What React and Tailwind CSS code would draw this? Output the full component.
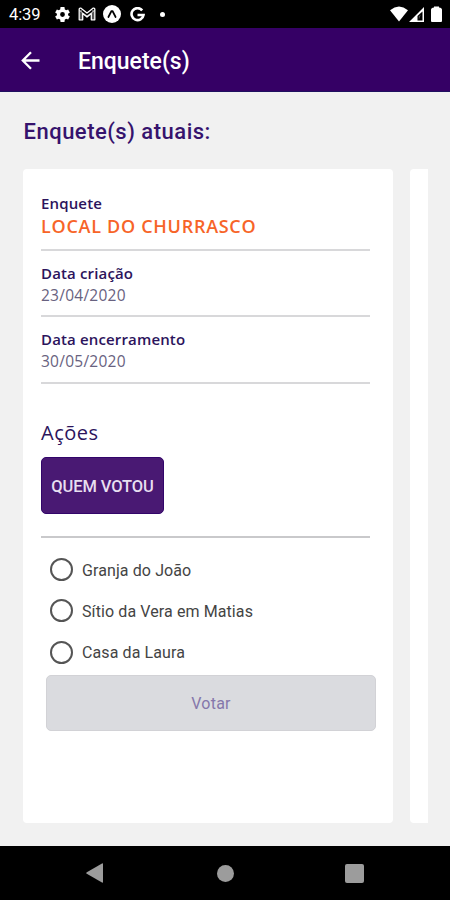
const label = "block h-[22px] whitespace-nowrap text-[15px] font-semibold leading-[22px] tracking-[0.15px] text-[#2c145c]";
const date = "block h-[22px] whitespace-nowrap text-[15.5px] font-normal leading-[22px] tracking-[0.25px] text-[#686280]";
const rule = "h-0.5 w-[329px] bg-[#d8d8da]";

function StatusBar() {
  return (
    <div className="flex h-7 shrink-0 items-center justify-between bg-black pl-[9px] pr-2 text-white">
      <div className="flex h-full items-center">
        <span className="w-[46px] whitespace-nowrap pt-px text-[16.5px] leading-7 tracking-[-0.1px]">4:39</span>
        <svg className="h-[15px] w-[15px]" viewBox="2 2 20 20" fill="currentColor">
          <path fillRule="evenodd" d="M19.4 13a7.5 7.5 0 0 0 0-2l2.400-1.800-2.300-4-2.700 1.100a7.300 7.300 0 0 0-1.700-1L14.600 2H9.400l-.5 3.300a7.300 7.300 0 0 0-1.700 1L4.500 5.200l-2.300 4L4.600 11a7.500 7.500 0 0 0 0 2l-2.400 1.800 2.300 4 2.700-1.100a7.300 7.300 0 0 0 1.700 1l.5 3.300h5.200l.5-3.300a7.300 7.300 0 0 0 1.700-1l2.700 1.100 2.300-4zM12 8.800a3.200 3.200 0 1 1 0 6.400 3.200 3.200 0 0 1 0-6.400z" />
        </svg>
        <svg className="ml-2 h-[14px] w-[18px]" viewBox="0 0 18 14" fill="none" stroke="currentColor">
          <path d="M1.200 12.800V2.200Q1.400.7 3 1.200L9 6l6-4.800q1.600-.5 1.800 1v10.600h-3.500V6.500L9 10 4.700 6.500v6.300z" strokeWidth="1.300" strokeLinejoin="round" />
          <path d="m1.500 3.500 7.500 5.500 7.500-5.500M3 3v9.500M15 3v9.500" strokeWidth="1" opacity=".7" />
        </svg>
        <svg className="ml-[7px] h-[18px] w-[18px]" viewBox="0 0 18 18">
          <circle cx="9" cy="9" r="9" fill="white" />
          <path d="m5.400 12 3.100-6h1l3.100 6" fill="none" stroke="black" strokeWidth="1.700" strokeLinecap="round" strokeLinejoin="round" />
        </svg>
        <svg className="ml-[9px] h-[15px] w-[15px]" viewBox="0 0 15 15" fill="none" stroke="currentColor" strokeWidth="2.600">
          <path d="M12.200 3.300A6 6 0 1 0 13.500 8H7.500" />
        </svg>
        <span className="ml-[15px] h-[5px] w-[5px] rounded-full bg-white" />
      </div>
      <div className="flex items-center">
        <svg className="h-[16px] w-[18px]" viewBox="0 0 18 16" fill="currentColor">
          <path d="M0 4.200Q9-3 18 4.200L9 15.500z" />
        </svg>
        <svg className="ml-px h-[15px] w-[15px]" viewBox="0 0 15 15" fill="currentColor">
          <path fillRule="evenodd" d="M15 0v15H0zM13.500 4.500 8.500 9v4.500h5z" />
          <path d="M9.800 12.800V9.500l2-2z" opacity=".35" />
        </svg>
        <svg className="ml-[7px] h-[16px] w-[11px]" viewBox="0 0 11 16" fill="currentColor">
          <path d="M3 1.500V.5h5v1q3 .3 3 2.300V15q0 1-1 1H1q-1 0-1-1V3.800q0-2 3-2.300z" />
        </svg>
      </div>
    </div>
  );
}

function Option({ children }) {
  return (
    <div className="flex h-[41.3px] items-center">
      <span className="h-[23px] w-[23px] rounded-full border-2 border-[#555]" />
      <span className="ml-[9px] whitespace-nowrap pt-[2px] text-base tracking-[0.100px] text-[#444]">{children}</span>
    </div>
  );
}

export default function App() {
  return (
    <div className="flex h-[900px] w-[450px] flex-col overflow-hidden bg-[#f1f1f1] font-['Roboto',sans-serif]">
      <StatusBar />
      <header className="flex h-16 shrink-0 items-center border-b border-[#201060] bg-[#350065] text-white">
        <svg className="ml-[21px] mt-[2px] h-[19px] w-[19px]" viewBox="0 0 19 19" fill="none" stroke="currentColor" strokeWidth="2.300">
          <path d="M18.500 9.500H2M10 1.300 1.800 9.500l8.200 8.200" />
        </svg>
        <h1 className="ml-[38px] mt-[6px] whitespace-nowrap text-[23px] font-medium">Enquete(s)</h1>
      </header>

      <h2 className="ml-[23.500px] mt-[23px] h-[34px] whitespace-nowrap text-[22px] font-medium leading-[34px] tracking-[0.500px] text-[#36136d]">
        Enquete(s) atuais:
      </h2>

      <div className="ml-[23px] mt-[20px] flex h-[654px] w-[405px] shrink-0 gap-[17px] overflow-hidden">
        <section className="w-[370px] shrink-0 rounded-[4px] bg-white pl-[18px] pt-[23px]">
          <div className="font-['Open_Sans',sans-serif]">
            <span className={label}>Enquete</span>
            <span className="mt-px block h-[23px] whitespace-nowrap text-[18px] font-semibold leading-[23px] tracking-[0.720px] text-[#f76428]">LOCAL DO CHURRASCO</span>
            <div className={`${rule} mt-[11px]`} />
            <div className="mt-[11px]">
              <span className={label}>Data criação</span>
              <span className={date}>23/04/2020</span>
            </div>
            <div className={`${rule} mt-[9px]`} />
            <div className="mt-[11px]">
              <span className={label}>Data encerramento</span>
              <span className={date}>30/05/2020</span>
            </div>
            <div className={`${rule} mt-[10px]`} />
            <h3 className="mt-[34px] h-[30px] whitespace-nowrap text-[20px] font-medium leading-[30px] tracking-[0.500px] text-[#2c145c]">Ações</h3>
          </div>
          <button className="mt-[9px] flex h-[57px] w-[123px] items-center justify-center whitespace-nowrap rounded-[5px] border border-[#32056a] bg-[#491973] pt-[3px] text-[16.5px] font-medium tracking-[-0.100px] text-[#e7dff0]">
            QUEM VOTOU
          </button>
          <div className="mt-[22px] h-0.5 w-[329px] bg-[#c9c9cb]" />
          <div className="ml-[9px] mt-[11px]">
            <Option>Granja do João</Option>
            <Option>Sítio da Vera em Matias</Option>
            <Option>Casa da Laura</Option>
          </div>
          <button className="ml-[5px] mt-[2px] flex h-[56px] w-[330px] items-center justify-center rounded-[5px] border border-[#d2d2d6] bg-[#dadbdf] pt-[3px] text-base tracking-[0.200px] text-[#8577ab]">
            Votar
          </button>
        </section>
        <section className="w-[370px] shrink-0 rounded-[4px] bg-white" />
      </div>

      <nav className="mt-auto flex h-[54px] shrink-0 items-center bg-black text-[#9c9c9c]">
        <svg className="ml-[86px] h-5 w-[17px]" viewBox="0 0 17 20" fill="currentColor">
          <path d="M16 .5q1-.5 1 .5v18q0 1-1 .5L.8 10.800q-1.200-.8 0-1.600z" />
        </svg>
        <span className="ml-[114px] h-[17px] w-[17px] rounded-full bg-current" />
        <span className="ml-[111px] h-[19px] w-[19px] rounded-[2px] bg-current" />
      </nav>
    </div>
  );
}
